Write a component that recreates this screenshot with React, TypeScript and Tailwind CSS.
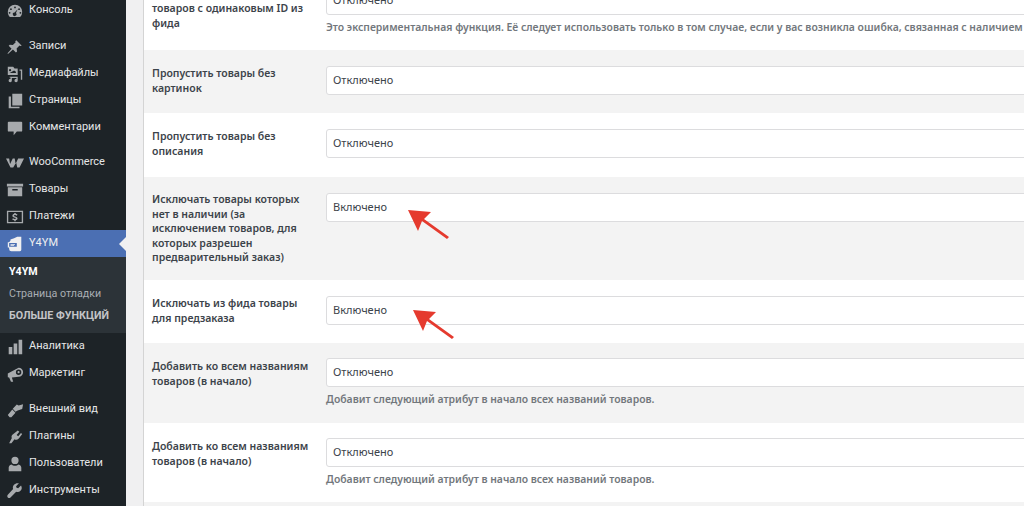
import React from 'react';

const Icon: React.FC<{ d: string }> = ({ d }) => (
  <svg viewBox="0 0 20 20" className="w-[18px] h-[18px] shrink-0" fill="currentColor" aria-hidden="true">
    <path d={d} fillRule="evenodd" />
  </svg>
);

const ICONS = {
  dashboard: 'M10 3a8 8 0 0 0-8 8c0 2.2.9 4.2 2.3 5.6h11.4A8 8 0 0 0 18 11a8 8 0 0 0-8-8zM10 5a1 1 0 1 1 0 2 1 1 0 0 1 0-2zM5.5 7a1 1 0 1 1 0 2 1 1 0 0 1 0-2zM14.5 7a1 1 0 1 1 0 2 1 1 0 0 1 0-2zM4 11a1 1 0 1 1 0 2 1 1 0 0 1 0-2zM16 11a1 1 0 1 1 0 2 1 1 0 0 1 0-2zM13 8l-2 4.2a2 2 0 1 1-1.5-.6z',
  pin: 'M11.5 2.500l6 6-1.500.5-1-.6-3.200 3.200.5 3.400-1.300 1.200-3.300-3.300-5.200 4.600-1-.2 4.700-5.400-3.200-3.200 1.200-1.300 3.400.5 3.200-3.200-.6-1z',
  media: 'M2 2h6l1.500 2H13v7H2zM4.500 4.500a1.200 1.200 0 1 0 0 2.400 1.200 1.200 0 0 0 0-2.400zM4 9h7V7.500L9 6zM15 5h3v11.500h-1.500V6.500H15zM4 13h9v4.200a1.800 1.800 0 1 1-1.500-1.700V14.500H6.500v2.700a1.800 1.800 0 1 1-1.500-1.700V14H4z',
  pages: 'M7 2h11v13H7zM3 5h2.500v11.500H15V18H3z',
  comment: 'M3 3h14a1 1 0 0 1 1 1v9a1 1 0 0 1-1 1h-5l-3.500 4v-4H3a1 1 0 0 1-1-1V4a1 1 0 0 1 1-1z',
  woo: 'M0 5h3.500l1 6 3-6h2.200l1 6 2.800-6H20l-5 10h-2.500l-1.200-5.500L8 15H5z',
  products: 'M1 3h18v3H1zM2 7h16v10H2zM7 9v1.500h6V9z',
  payments: 'M1 3h18v14H1zM2.500 4.500v11h15v-11zM9.200 5.500h1.600v1c.8.100 1.500.4 2 .9l-1 1.100c-.4-.4-1.100-.6-1.800-.6s-1.200.3-1.200.7c0 1.200 4 .6 4 3 0 1.100-.9 1.800-2 2v1H9.200v-1c-1-.1-1.800-.5-2.400-1.100l1-1c.5.400 1.200.7 2 .7s1.300-.3 1.300-.7c0-1.200-4-.5-4-3 0-1 .9-1.800 2.100-2z',
  y4ym: 'M12.500 2H17v14.500a1.500 1.500 0 0 1-1.500 1.500H6a2.500 2.500 0 0 1-2.500-2.500V14H2V8h1.500L5 6V5l4-1.500zM3.500 9v4H12V9zM5 10h5v.8H5zM5 11.500h4v.8H5z',
  analytics: 'M3 10h4v8H3zM8.500 6h4v12h-4zM14 2h4v16h-4z',
  marketing: 'M14 3a5 5 0 0 1 0 10l-7.500 1L8 18.500H5.500L3.500 14 2 13.500v-4zM14 5a3 3 0 0 0 0 6 3 3 0 0 0 0-6zM14 6.800a1.200 1.200 0 1 1 0 2.400 1.200 1.200 0 0 1 0-2.400z',
  appearance: 'M12 4l2 1 5-1.500-1 5.500-5 1.500-2.500 1.500-3-3.500zM7 9.500l3.500 3.500L6 18H4l-2-2.500z',
  plugins: 'M13.100 2.800l1.700 1.300-3 3.800 1.800 1.400 3-3.800 1.400 1.300-3.100 4-1 1.200c-1.200 1.200-3 1.400-4.400.5L6 17H3.500L6.500 11.200c-.6-1.200-.4-2.700.6-3.700z',
  users: 'M10 2a4 4 0 1 1 0 8 4 4 0 0 1 0-8zM6 10.500c1 1 2.500 1.500 4 1.500s3-.5 4-1.500c2 .5 3 2 3 3.500v4H3v-4c0-1.500 1-3 3-3.500z',
  tools: 'M16.700 3.800L13.500 7l-1.800-.5-.5-1.800 3.200-3.200c-2-.6-4.200 0-5.500 1.500-1.300 1.300-1.600 3.200-1 4.800L2 14.200c-.8.800-.8 2.200 0 3s2.200.800 3 0l6.300-6.400c1.600.6 3.500.3 4.800-1 1.500-1.400 2-3.900.6-6z',
};

const Spacer: React.FC<{ h: string }> = ({ h }) => <div className={h} />;

const MenuItem: React.FC<{ icon: keyof typeof ICONS; label: string }> = ({ icon, label }) => (
  <div className="flex items-center h-[27px] pl-[6px] text-[11px] text-[#e6e7e8] whitespace-nowrap font-['Roboto',sans-serif]">
    <span className="text-[#a7aaad]">
      <Icon d={ICONS[icon]} />
    </span>
    <span className="ml-[5px]">{label}</span>
  </div>
);

const Sidebar: React.FC = () => (
  <aside className="w-[126px] shrink-0 h-full bg-[#1d2327] overflow-hidden">
    <div className="-mt-[3px]">
      <MenuItem icon="dashboard" label="Консоль" />
    </div>
    <Spacer h="h-[9px]" />
    <MenuItem icon="pin" label="Записи" />
    <MenuItem icon="media" label="Медиафайлы" />
    <MenuItem icon="pages" label="Страницы" />
    <MenuItem icon="comment" label="Комментарии" />
    <Spacer h="h-[8px]" />
    <MenuItem icon="woo" label="WooCommerce" />
    <MenuItem icon="products" label="Товары" />
    <MenuItem icon="payments" label="Платежи" />
    <div className="relative flex items-center h-[27px] pl-[6px] bg-[#4b6fb3] text-[11px] text-[#f0f0f1] font-['Roboto',sans-serif]">
      <span className="text-[#f0f0f1]">
        <Icon d={ICONS.y4ym} />
      </span>
      <span className="ml-[5px]">Y4YM</span>
      <span className="absolute right-0 top-[7px] border-y-[7px] border-r-[7px] border-y-transparent border-r-[#f0f0f1]" />
    </div>
    <div className="bg-[#2c3338] h-[76px] pt-[4px] pl-[9px] text-[10.7px] whitespace-nowrap font-['Roboto',sans-serif]">
      <div className="h-[22px] leading-[22px] font-bold text-white">Y4YM</div>
      <div className="h-[22px] leading-[22px] text-[#a9aeb3]">Страница отладки</div>
      <div className="h-[22px] leading-[22px] font-bold text-[#c3c4c7]">БОЛЬШЕ ФУНКЦИЙ</div>
    </div>
    <MenuItem icon="analytics" label="Аналитика" />
    <MenuItem icon="marketing" label="Маркетинг" />
    <Spacer h="h-[9px]" />
    <MenuItem icon="appearance" label="Внешний вид" />
    <MenuItem icon="plugins" label="Плагины" />
    <MenuItem icon="users" label="Пользователи" />
    <MenuItem icon="tools" label="Инструменты" />
  </aside>
);

const Row: React.FC<{
  label: React.ReactNode;
  value: string;
  hint?: string;
  gray?: boolean;
  h: string;
  top?: string;
  labelTop?: string;
}> = ({ label, value, hint, gray, h, top = 'pt-[16px]', labelTop = 'pt-0' }) => (
  <div className={`flex shrink-0 ${h} ${top} ${gray ? 'bg-[#f3f3f3]' : 'bg-white'}`}>
    <div className={`w-[182px] shrink-0 pl-[8px] pr-[10px] ${labelTop} text-[10.5px] leading-[14.6px] font-semibold whitespace-nowrap text-[#3c434a]`}>{label}</div>
    <div className="flex-1 min-w-0">
      <div className="h-[29px] w-[900px] pl-[6px] flex items-center rounded-[3px] border border-[#dcdcde] bg-white text-[11px] text-[#3c434a]">
        {value}
      </div>
      {hint && <div className="mt-[5px] whitespace-nowrap text-[10.4px] font-semibold text-[#72777c]">{hint}</div>}
    </div>
  </div>
);

const Arrow: React.FC<{ className: string }> = ({ className }) => (
  <svg viewBox="0 0 44 34" className={`absolute w-[44px] h-[34px] ${className}`} aria-hidden="true">
    <path d="M0 0L23 2L16 9L41 27L39 29L14 11L10 21z" fill="#e53a2e" />
  </svg>
);

const App: React.FC = () => (
  <div className="relative flex h-[506px] w-[1024px] overflow-hidden bg-[#f0f0f1] font-['Noto_Sans','Open_Sans',sans-serif]">
    <Sidebar />
    <main className="ml-[17px] flex-1 min-w-0 flex flex-col border-l border-[#d4d4d4] overflow-hidden">
      <div className="-mt-[14px] flex flex-col">
        <Row
          h="h-[64px]"
          top="pt-0"
          labelTop="pt-[15px]"
          label={<>товаров с одинаковым ID из<br />фида</>}
          value="Отключено"
          hint="Это экспериментальная функция. Её следует использовать только в том случае, если у вас возникла ошибка, связанная с наличием т"
        />
        <Row gray h="h-[63px]" label={<>Пропустить товары без<br />картинок</>} value="Отключено" />
        <Row h="h-[64px]" label={<>Пропустить товары без<br />описания</>} value="Отключено" />
        <Row
          gray
          h="h-[103px]"
          labelTop="-mt-[1px]"
          label={<>Исключать товары которых<br />нет в наличии (за<br />исключением товаров, для<br />которых разрешен<br />предварительный заказ)</>}
          value="Включено"
        />
        <Row h="h-[63px]" label={<>Исключать из фида товары<br />для предзаказа</>} value="Включено" />
        <Row
          gray
          h="h-[80px]"
          top="pt-[15px]"
          labelTop="pt-[1px]"
          label={<>Добавить ко всем названиям<br />товаров (в начало)</>}
          value="Отключено"
          hint="Добавит следующий атрибут в начало всех названий товаров."
        />
        <Row
          h="h-[79px]"
          top="pt-[15px]"
          labelTop="pt-[1px]"
          label={<>Добавить ко всем названиям<br />товаров (в начало)</>}
          value="Отключено"
          hint="Добавит следующий атрибут в начало всех названий товаров."
        />
        <div className="h-[20px] bg-[#f3f3f3]" />
      </div>
    </main>
    <Arrow className="left-[408px] top-[210px]" />
    <Arrow className="left-[413px] top-[310px]" />
  </div>
);

export default App;
